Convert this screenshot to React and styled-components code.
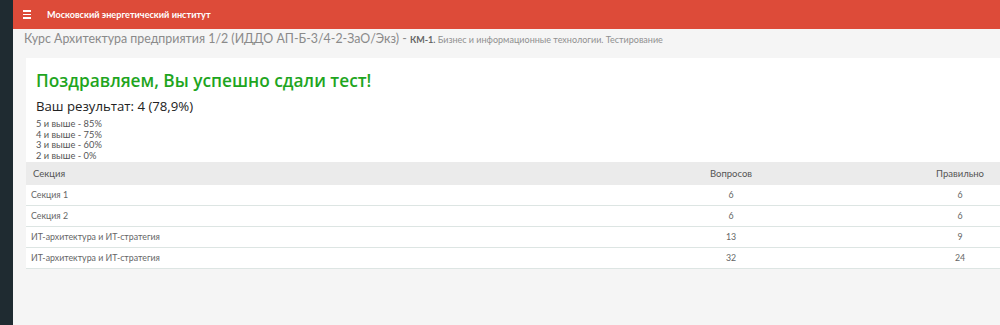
import styled, { createGlobalStyle } from 'styled-components';

const GlobalStyle = createGlobalStyle`
  html, body {
    margin: 0;
    padding: 0;
    background: #f5f5f5;
    overflow: hidden;
  }
  body {
    font-family: Lato, 'Liberation Sans', sans-serif;
  }
`;

const results = [
  { title: 'Секция 1', total: 6, right: 6 },
  { title: 'Секция 2', total: 6, right: 6 },
  { title: 'ИТ-архитектура и ИТ-стратегия', total: 13, right: 9 },
  { title: 'ИТ-архитектура и ИТ-стратегия', total: 32, right: 24 },
];

const grades = ['5 и выше - 85%', '4 и выше - 75%', '3 и выше - 60%', '2 и выше - 0%'];

const App = () => {
  return (
    <>
      <GlobalStyle />
      <Layout>
        <Sidebar />
        <Main>
          <TopBar>
            <Burger>
              <span />
              <span />
              <span />
            </Burger>
            <BrandTitle>Московский энергетический институт</BrandTitle>
          </TopBar>
          <CourseTitle>
            Курс Архитектура предприятия 1/2 (ИДДО АП-Б-3/4-2-ЗаО/Экз) - <Small><b>КМ-1.</b> Бизнес и информационные технологии. Тестирование</Small>
          </CourseTitle>
          <Card>
            <Congrats>Поздравляем, Вы успешно сдали тест!</Congrats>
            <Score>Ваш результат: 4 (78,9%)</Score>
            <Grades>
              {grades.map(g => (
                <div key={g}>{g}</div>
              ))}
            </Grades>
            <Table>
              <HeadRow>
                <Cell>Секция</Cell>
                <Cell center>Вопросов</Cell>
                <Cell center>Правильно</Cell>
              </HeadRow>
              {results.map((r, i) => (
                <Row key={i}>
                  <Cell>{r.title}</Cell>
                  <Cell center>{r.total}</Cell>
                  <Cell center>{r.right}</Cell>
                </Row>
              ))}
            </Table>
          </Card>
        </Main>
      </Layout>
    </>
  );
};

const Layout = styled.div`
  display: flex;
  width: 1100px;
  height: 325px;
`;

const Sidebar = styled.div`
  width: 13px;
  flex-shrink: 0;
  background: #1f2b31;
`;

const Main = styled.div`
  flex: 1;
  display: flex;
  flex-direction: column;
  background: #f5f5f5;
`;

const TopBar = styled.div`
  height: 29px;
  display: flex;
  align-items: center;
  background: #dd4b39;
  padding-left: 10px;
  gap: 16px;
`;

const Burger = styled.div`
  display: flex;
  flex-direction: column;
  gap: 2px;
  width: 8px;
  span {
    display: block;
    height: 1.5px;
    background: #fff;
  }
`;

const BrandTitle = styled.div`
  color: #fff;
  font-size: 9.1px;
  font-weight: 700;
`;

const CourseTitle = styled.div`
  color: #8a8a8a;
  font-size: 12.4px;
  line-height: 18px;
  padding: 1px 0 0 11px;
`;

const Small = styled.span`
  font-size: 9px;
  color: #909090;
  b {
    color: #666;
    font-weight: 700;
  }
`;

const Card = styled.div`
  margin: 9px 0 0 13px;
  background: #fff;
  width: 1048px;
  padding-top: 9px;
  border-bottom: 1px solid #dde5e3;
`;

const Congrats = styled.div`
  color: #1ea51e;
  font-family: 'Open Sans', 'Liberation Sans', sans-serif;
  font-size: 17.3px;
  font-weight: 600;
  line-height: 28px;
  padding-left: 10px;
`;

const Score = styled.div`
  color: #222;
  font-family: 'Open Sans', 'Liberation Sans', sans-serif;
  font-size: 13.2px;
  line-height: 20px;
  padding-left: 10px;
  margin-top: 1px;
`;

const Grades = styled.div`
  color: #555;
  font-size: 9.3px;
  line-height: 10.7px;
  padding-left: 10px;
  margin-top: 3px;
`;

const Table = styled.div`
  display: flex;
  flex-direction: column;
`;

const HeadRow = styled.div`
  display: grid;
  grid-template-columns: 590px 230px 228px;
  height: 23px;
  align-items: center;
  background: #ebebeb;
  color: #555;
  font-size: 9.5px;
  & > div:first-child {
    padding-left: 7px;
  }
`;

const Row = styled.div`
  display: grid;
  grid-template-columns: 590px 230px 228px;
  height: 20px;
  align-items: center;
  color: #666;
  font-size: 8.8px;
  & + & {
    border-top: 1px solid #dde5e3;
  }
`;

const Cell = styled.div`
  padding-left: ${({ center }) => (center ? '0' : '5px')};
  text-align: ${({ center }) => (center ? 'center' : 'left')};
`;

export default App;
